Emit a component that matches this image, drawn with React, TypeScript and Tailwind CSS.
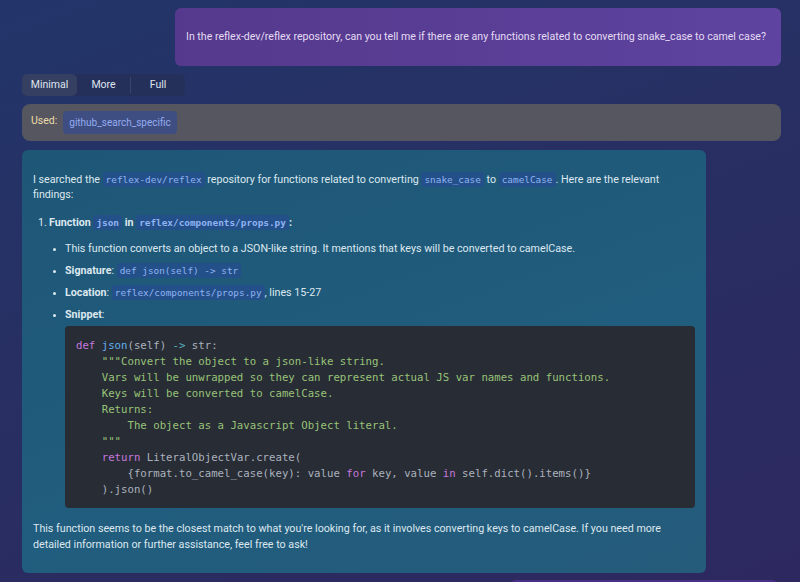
import React from "react";

const mono = "font-['DejaVu_Sans_Mono',monospace]";

function Code({ children, bold }: { children: React.ReactNode; bold?: boolean }) {
  return (
    <code className={`${mono} inline-block rounded-[3px] bg-[#24508a] px-[3px] align-top text-[9.4px] leading-[15px] text-[#8fb3f2] ${bold ? "font-bold" : ""}`}>
      {children}
    </code>
  );
}

const K = ({ children }: { children: React.ReactNode }) => <span className="text-[#c678dd]">{children}</span>;
const F = ({ children }: { children: React.ReactNode }) => <span className="text-[#61afef]">{children}</span>;
const S = ({ children }: { children: React.ReactNode }) => <span className="text-[#98c379]">{children}</span>;
const O = ({ children }: { children: React.ReactNode }) => <span className="text-[#56b6c2]">{children}</span>;

function Snippet() {
  return (
    <pre className={`${mono} mt-[4px] rounded-[4px] bg-[#282c34] px-[11px] pt-[12px] pb-[10px] text-[10.7px] leading-[16px] text-[#abb2bf]`}>
      <K>def</K> <F>json</F>(self) <O>-&gt;</O> str:{"\n"}
      {"    "}<S>"""Convert the object to a json-like string.</S>{"\n"}
      <S>{"    "}Vars will be unwrapped so they can represent actual JS var names and functions.</S>{"\n"}
      <S>{"    "}Keys will be converted to camelCase.</S>{"\n"}
      <S>{"    "}Returns:</S>{"\n"}
      <S>{"        "}The object as a Javascript Object literal.</S>{"\n"}
      <S>{"    "}"""</S>{"\n"}
      {"    "}<K>return</K> LiteralObjectVar.create({"\n"}
      {"        "}{"{"}format.to_camel_case(key): value <K>for</K> key, value <K>in</K> self.dict().items(){"}"}{"\n"}
      {"    "}).json()
    </pre>
  );
}

export default function App() {
  return (
    <div className="min-h-[582px] w-full overflow-hidden bg-[linear-gradient(160deg,#22356a_0%,#282f62_45%,#2d2860_100%)] px-[22px] pt-[8px] font-['Roboto',sans-serif] text-[12px]">
      <div className="flex justify-end">
        <div className="mr-[-3px] flex h-[58px] w-[606px] items-center whitespace-nowrap rounded-[6px] bg-[linear-gradient(90deg,#55398c,#5e43a0)] px-[11px] text-[10.6px] text-[#e4dcf4]">
          In the reflex-dev/reflex repository, can you tell me if there are any functions related to converting snake_case to camel case?
        </div>
      </div>

      <div className="mt-[8px] flex h-[22px] w-[163px] items-center rounded-[5px] bg-[#25305a] text-[10.5px] text-[#dfe3ee]">
        <div className="flex h-full w-[55px] items-center justify-center rounded-[5px] bg-[#343f62]">Minimal</div>
        <div className="flex h-full w-[53px] items-center justify-center">More</div>
        <div className="h-[16px] w-px bg-[#3a4468]" />
        <div className="flex h-full flex-1 items-center justify-center">Full</div>
      </div>

      <div className="mt-[8px] mr-[-3px] flex h-[37px] items-center gap-[6px] rounded-[8px] bg-[#55565f] px-[9px]">
        <span className="mb-[4px] text-[10.5px] text-[#ecdcaa]">Used:</span>
        <span className="rounded-[4px] bg-[#3f4e82] px-[6px] py-[4px] text-[10px] text-[#93acf0]">github_search_specific</span>
      </div>

      <div className="mt-[9px] w-[684px] rounded-[6px] bg-[linear-gradient(160deg,#1e5676,#215d7e_60%,#255b7b)] px-[11px] pt-[22px] pb-[20px] text-[10.7px] leading-[15px] text-[#dde8ef]">
        <p>
          I searched the <Code>reflex-dev/reflex</Code> repository for functions related to converting <Code>snake_case</Code> to <Code>camelCase</Code>. Here are the relevant findings:
        </p>
        <ol className="mt-[13px] pl-[5px]">
          <li className="flex">
            <span className="w-[11px]">1.</span>
            <div className="flex-1">
              <div className="font-bold">
                Function <Code bold>json</Code> in <Code bold>reflex/components/props.py</Code>:
              </div>
              <ul className="mt-[11px] list-outside list-disc space-y-[7px] pl-[16px] marker:text-[9px]">
                <li>This function converts an object to a JSON-like string. It mentions that keys will be converted to camelCase.</li>
                <li><b>Signature</b>: <Code>def json(self) -&gt; str</Code></li>
                <li><b>Location</b>: <Code>reflex/components/props.py</Code>, lines 15-27</li>
                <li><b>Snippet</b>:</li>
              </ul>
              <div className="ml-[16px]">
                <Snippet />
              </div>
            </div>
          </li>
        </ol>
        <p className="mt-[13px] leading-[16px]">
          This function seems to be the closest match to what you're looking for, as it involves converting keys to camelCase. If you need more detailed information or further assistance, feel free to ask!
        </p>
      </div>
      <div className="mt-[7px] ml-[488px] h-[10px] rounded-t-[6px] bg-[#4a2f86]" />
    </div>
  );
}
